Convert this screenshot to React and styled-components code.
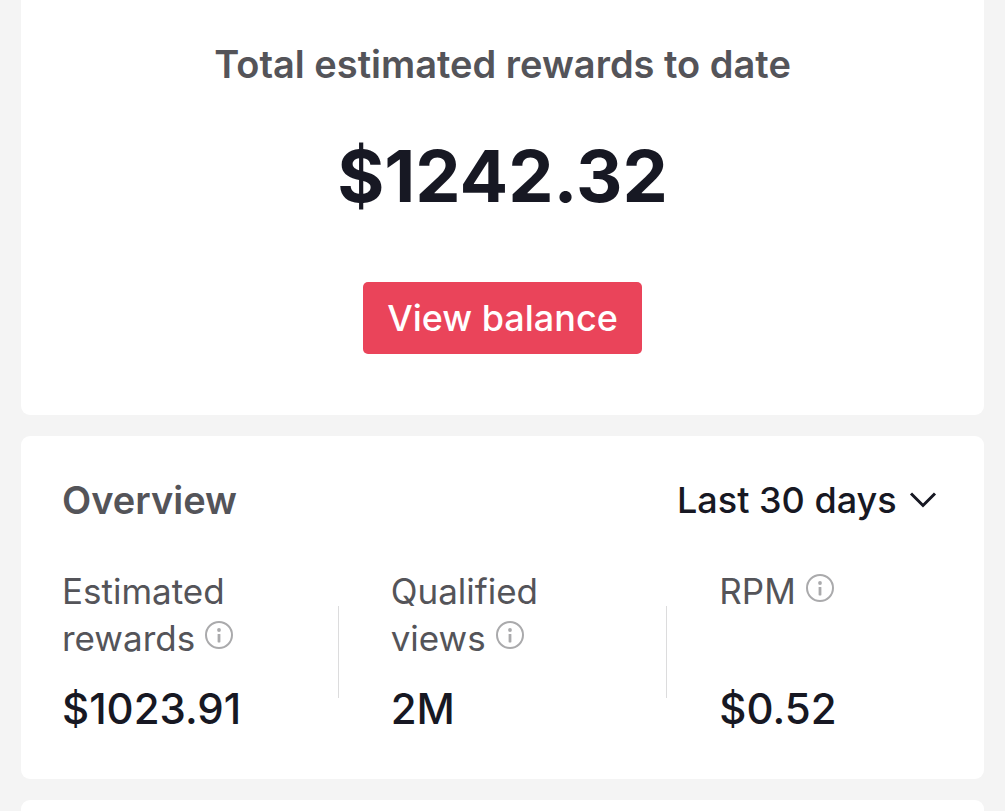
import { Fragment } from "react";
import styled, { createGlobalStyle } from "styled-components";

const stats = [
  { label: "Estimated rewards", value: "$1023.91" },
  { label: "Qualified views", value: "2M" },
  { label: "RPM", value: "$0.52" },
];

function InfoIcon() {
  return (
    <svg viewBox="0 0 28 28" aria-hidden="true">
      <circle cx="14" cy="14" r="13" fill="none" stroke="currentColor" strokeWidth="2" />
      <circle cx="14" cy="9" r="1.9" fill="currentColor" />
      <rect x="12.6" y="13" width="2.8" height="8.4" rx="0.6" fill="currentColor" />
    </svg>
  );
}

function App() {
  return (
    <>
      <GlobalStyle />
      <Page>
        <Card $first>
          <Title>Total estimated rewards to date</Title>
          <Total>$1242.32</Total>
          <BalanceButton type="button">View balance</BalanceButton>
        </Card>
        <Card>
          <Header>
            <Title as="h2">Overview</Title>
            <Period>
              <PeriodSelect aria-label="Period" defaultValue="30">
                <option value="30">Last 30 days</option>
              </PeriodSelect>
              <svg viewBox="0 0 28 18" aria-hidden="true">
                <path d="M2 2.5 L14 14.5 L26 2.5" />
              </svg>
            </Period>
          </Header>
          <Stats>
            {stats.map((stat, index) => (
              <Fragment key={stat.label}>
                {index > 0 && <Divider />}
                <Stat>
                  <Label>
                    {stat.label}{" "}
                    <InfoButton type="button" aria-label={`About ${stat.label}`}>
                      <InfoIcon />
                    </InfoButton>
                  </Label>
                  <Value>{stat.value}</Value>
                </Stat>
              </Fragment>
            ))}
          </Stats>
        </Card>
        <Card />
      </Page>
    </>
  );
}

const GlobalStyle = createGlobalStyle`
  * {
    box-sizing: border-box;
    margin: 0;
  }
  body {
    background: #f4f4f4;
    color: #171823;
    font-family: Inter, "Liberation Sans", sans-serif;
    overflow: hidden;
  }
  button,
  select {
    font: inherit;
    border: 0;
    cursor: pointer;
  }
`;

const Page = styled.main`
  height: 100vh;
  overflow: hidden;
  padding: 0 21px;
`;

const Card = styled.section`
  display: flow-root;
  min-height: 80px;
  margin-bottom: 21px;
  padding: ${({ $first }) => ($first ? "40px 41px 61px" : "40px 41px 43px")};
  background: #fff;
  border-radius: ${({ $first }) => ($first ? "0 0 9px 9px" : "9px")};
  text-align: ${({ $first }) => ($first ? "center" : "left")};
`;

const Title = styled.h1`
  color: #545459;
  font-size: 38px;
  font-weight: 600;
  line-height: 48px;
`;

const Total = styled.p`
  margin: 43px 0 61px;
  font-size: 72px;
  font-weight: 700;
  line-height: 90px;
`;

const BalanceButton = styled.button`
  height: 72px;
  padding: 0 24px;
  background: #ea445a;
  border-radius: 5px;
  color: #fff;
  font-size: 36px;
  font-weight: 500;
  vertical-align: top;
`;

const Header = styled.header`
  display: flex;
  align-items: center;
  justify-content: space-between;
  height: 48px;
`;

const Period = styled.div`
  display: flex;
  align-items: center;
  gap: 12px;
  margin-right: 6px;

  svg {
    width: 28px;
    height: 18px;
    fill: none;
    stroke: #171823;
    stroke-width: 3;
  }
`;

const PeriodSelect = styled.select`
  appearance: none;
  padding: 0;
  background: none;
  color: inherit;
  font-size: 36px;
  font-weight: 500;
  line-height: 48px;
`;

const Stats = styled.div`
  display: flex;
  align-items: center;
  gap: 52px;
  margin-top: 44px;
`;

const Stat = styled.div`
  display: flex;
  flex: 1;
  flex-direction: column;
  align-self: stretch;
  justify-content: space-between;
  min-width: 0;
`;

const Label = styled.p`
  color: #545459;
  font-size: 35px;
  line-height: 47px;
`;

const InfoButton = styled.button`
  width: 28px;
  height: 28px;
  padding: 0;
  background: none;
  color: #aaaaac;
  vertical-align: 2px;

  svg {
    display: block;
  }
`;

const Value = styled.p`
  margin-top: 20px;
  font-size: 42px;
  font-weight: 500;
  line-height: 54px;
`;

const Divider = styled.div`
  width: 1px;
  height: 92px;
  background: #dcdcdd;
`;

export default App;
